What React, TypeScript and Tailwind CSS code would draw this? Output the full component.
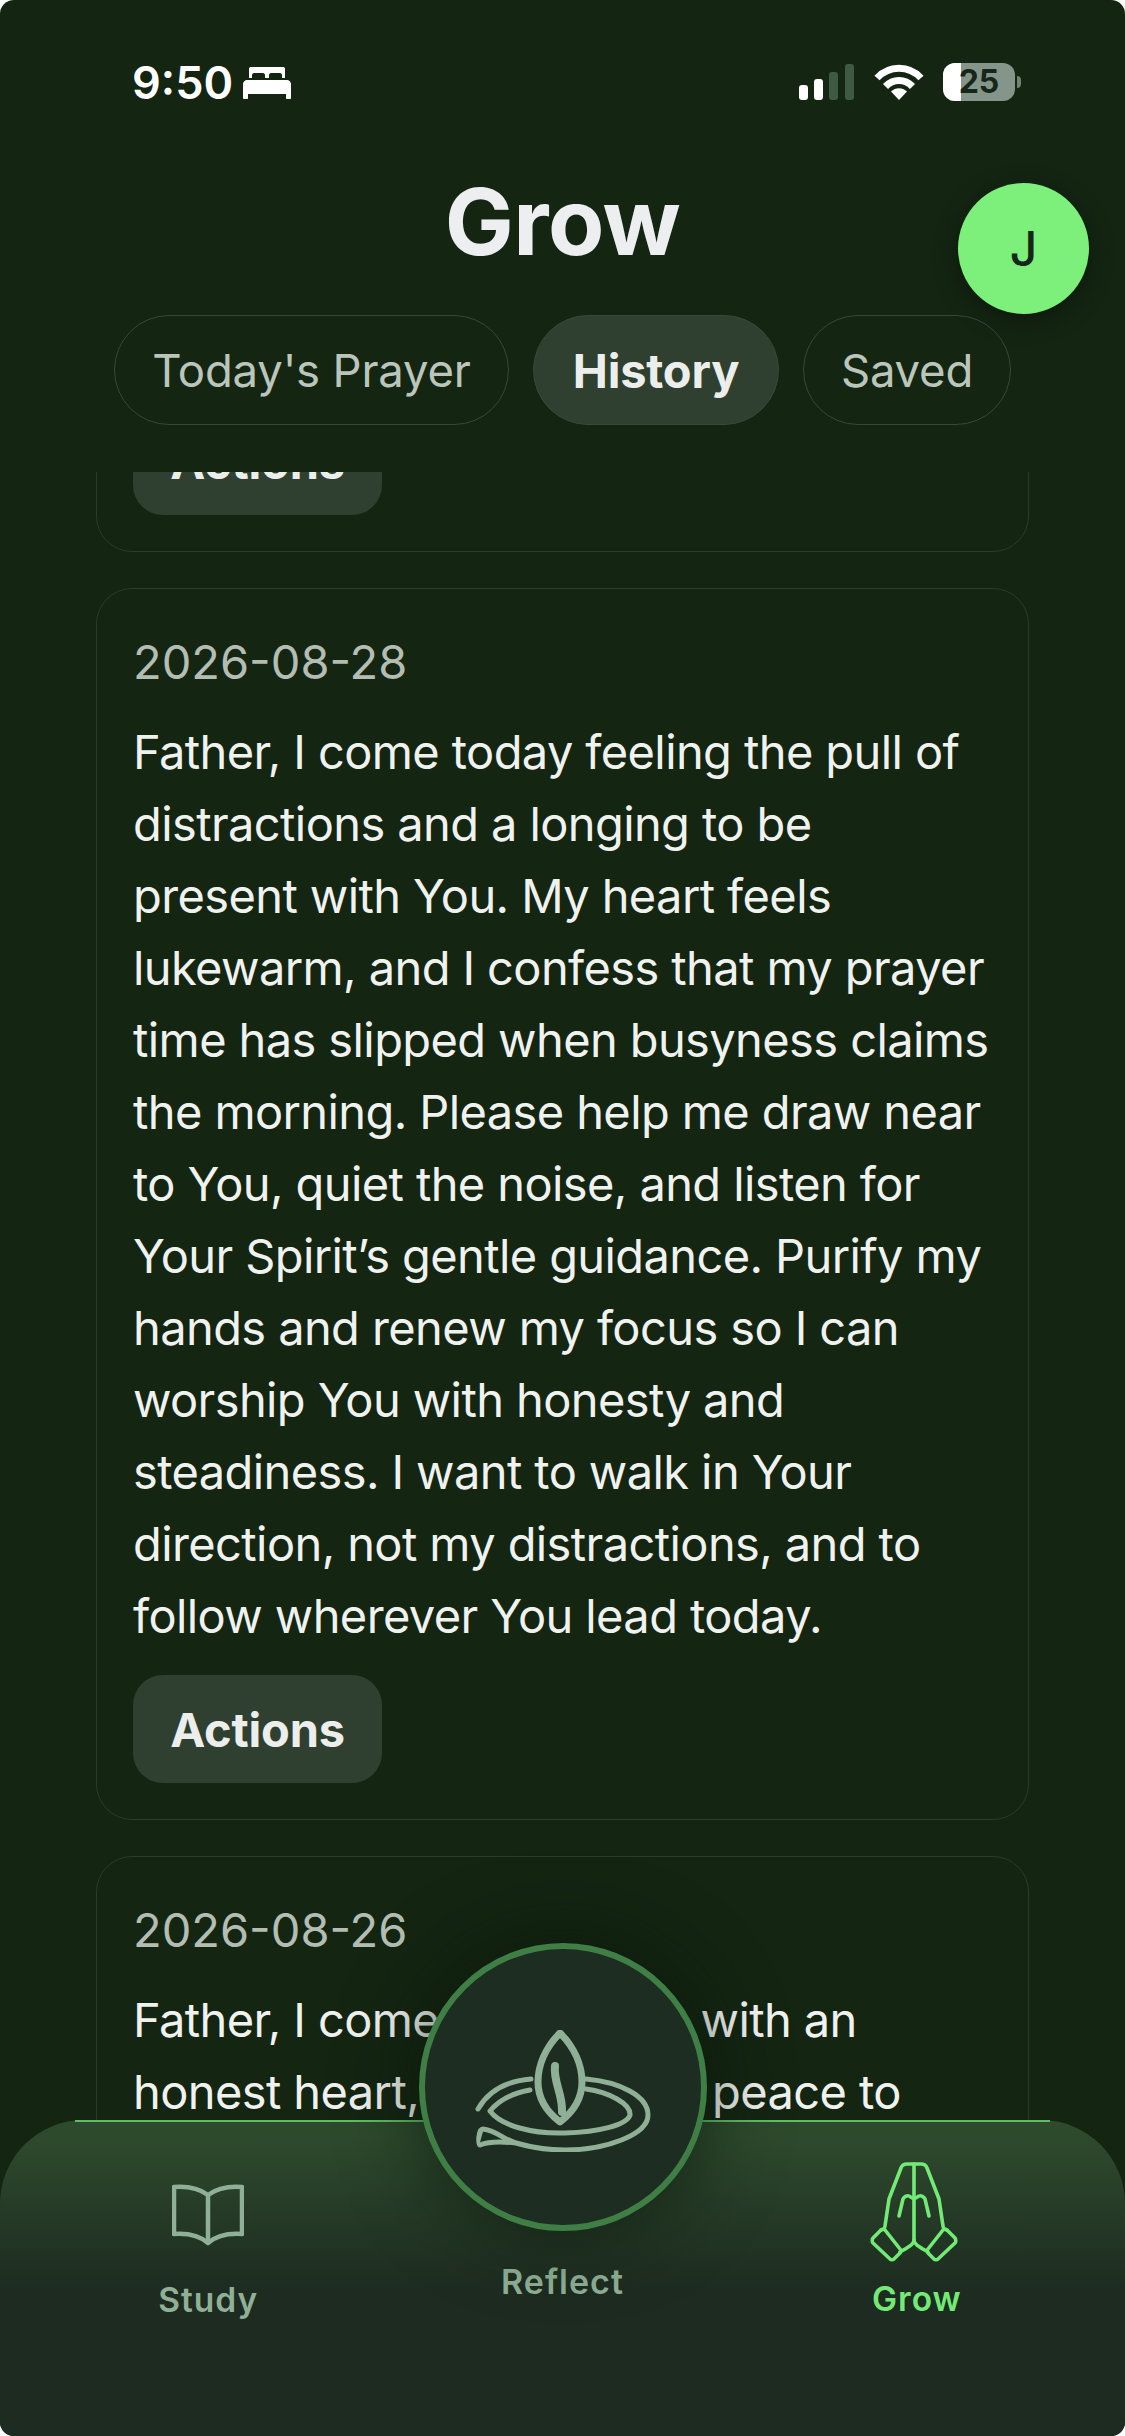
import { ReactNode } from 'react';

const sans = 'font-["Inter","Liberation_Sans",sans-serif]';

const prayer1 = [
  'Father, I come today feeling the pull of',
  'distractions and a longing to be',
  'present with You. My heart feels',
  'lukewarm, and I confess that my prayer',
  'time has slipped when busyness claims',
  'the morning. Please help me draw near',
  'to You, quiet the noise, and listen for',
  'Your Spirit’s gentle guidance. Purify my',
  'hands and renew my focus so I can',
  'worship You with honesty and',
  'steadiness. I want to walk in Your',
  'direction, not my distractions, and to',
  'follow wherever You lead today.',
];

const prayer2 = [
  'Father, I come before You with an',
  'honest heart, seeking true peace to',
  'settle over every part of my day.',
];

function StatusBar() {
  return (
    <div className="flex h-[166px] shrink-0 items-start justify-between pl-[132px] pr-[104px] pt-[55px]">
      <div className="flex items-center gap-[10px]">
        <span className="text-[45px] leading-[56px] font-semibold text-white">9:50</span>
        <svg width="48" height="32" viewBox="0 0 48 32" fill="#fff">
          <path d="M6 1.5C6 .7 7 0 8 0h32c1 0 2 .7 2 1.500V11h-3V8c0-1-1-2-2-2h-9c-1 0-2 1-2 2v3h-4V8c0-1-1-2-2-2h-9c-1 0-2 1-2 2v3H6Z" />
          <path d="M4 13h40c2 0 4 2 4 4v14c0 .6-.4 1-1 1h-3c-.6 0-1-.4-1-1v-4H5v4c0 .6-.4 1-1 1H1c-.6 0-1-.4-1-1V17c0-2 2-4 4-4Z" />
        </svg>
      </div>
      <div className="mt-[8px] flex items-center gap-[19px]">
        <svg width="56" height="36" viewBox="0 0 56 36">
          <rect x="0" y="21" width="9" height="15" rx="3" fill="#fff" />
          <rect x="15" y="15" width="9" height="21" rx="3" fill="#fff" />
          <rect x="30" y="8" width="9" height="28" rx="3" fill="#3f5a42" />
          <rect x="46" y="0" width="9" height="36" rx="3" fill="#3f5a42" />
        </svg>
        <svg width="50" height="37" viewBox="0 0 50 37" fill="none" stroke="#fff" strokeWidth="7">
          <path d="M3 14C15 1 35 1 47 14" />
          <path d="M11.500 22.500C19 14.500 31 14.500 38.500 22.500" />
          <path d="M25 36 17 27.500C21.500 23 28.500 23 33 27.500Z" fill="#fff" stroke="none" />
        </svg>
        <div className="flex items-center gap-[2px]">
          <div className="relative flex h-[38px] w-[72px] items-center justify-center overflow-hidden rounded-[12px] bg-[#85958a]">
            <div className="absolute inset-y-0 left-0 w-[18px] bg-white" />
            <span className="relative text-[32px] leading-none font-bold text-[#16261a]">25</span>
          </div>
          <div className="h-[12px] w-[4px] rounded-r-full bg-[#6f8274]" />
        </div>
      </div>
    </div>
  );
}

function Tab({ label, active, width }: { label: string; active?: boolean; width: string }) {
  return (
    <div
      className={`flex h-[110px] items-center justify-center rounded-full border border-[#364a38] pt-[2px] ${width} ${
        active ? 'bg-[#2f4030] text-[47px] font-bold tracking-[-0.2px] text-[#eceeec]' : 'text-[45.5px] tracking-[-0.2px] text-[#bcc5bc]'
      }`}
    >
      {label}
    </div>
  );
}

function ActionsButton() {
  return (
    <div className="flex h-[108px] w-[249px] items-center justify-center rounded-[30px] bg-[#2f4030] pt-[2px] text-[47px] font-bold tracking-[-0.2px] text-[#eceeec]">
      Actions
    </div>
  );
}

function Card({ date, lines, children }: { date?: string; lines: string[]; children?: ReactNode }) {
  return (
    <div className="shrink-0 rounded-[36px] border border-[#2a3c2c] px-[36px] pt-[37px] pb-[36px]">
      {date && <div className="mb-[18px] text-[47px] leading-[72px] text-[#b4bdb4]">{date}</div>}
      <div className="text-[47px] leading-[72px] tracking-[-0.6px] text-[#f0f2ef]">
        {lines.map((l) => (
          <div key={l} className="whitespace-nowrap">
            {l}
          </div>
        ))}
      </div>
      {children && <div className="mt-[23px]">{children}</div>}
    </div>
  );
}

function BookIcon() {
  return (
    <svg width="72" height="62" viewBox="0 0 72 62" fill="none" stroke="#8fb096" strokeWidth="4.500" strokeLinejoin="round">
      <path d="M2 3C16 2 28 5 36 11C44 5 56 2 70 3V50C56 49 44 52 36 59C28 52 16 49 2 50Z" />
      <path d="M36 11V59" />
    </svg>
  );
}

function ReflectIcon() {
  return (
    <svg width="176" height="122" viewBox="0 0 176 122" fill="none" stroke="#8fb096" strokeWidth="5" strokeLinecap="round" strokeLinejoin="round">
      <path d="M85 3C70 18 63 36 63 52C63 68 72 82 85 92C98 82 107 68 107 52C107 36 100 18 85 3Z" strokeWidth="7" />
      <path d="M80 36C78 52 88 64 87 82" strokeWidth="8" />
      <path d="M56 49C32 51 14 60 3 79" />
      <path d="M55 60C38 63 24 70 15 81C26 96 58 104 90 103C124 102 152 95 155 85C156 74 134 62 111 59" />
      <path d="M111 49C145 52 173 66 173 85C173 105 130 120 90 120C70 120 55 117 41 113C30 110 20 100 8 99C3 99 3 115 5 115C12 112 24 111 41 113" />
    </svg>
  );
}

function PrayIcon() {
  return (
    <svg width="88" height="100" viewBox="0 0 88 100" fill="none" stroke="#72ea75" strokeWidth="3.600" strokeLinecap="round" strokeLinejoin="round">
      <path d="M44 78V2M44 2H37C34 2 32 3 31 6L19 37L15 64C15 66 13 68 11 68" />
      <path d="M44 2H51C54 2 56 3 57 6L69 37L73 64C73 66 75 68 77 68" />
      <path d="M29 54L33 37C34 35 37 33 39 34L44 37L49 34C51 33 54 35 55 37L59 54" />
      <path d="M44 78C44 82 40 84 30 90M44 78C44 82 48 84 58 90" />
      <path d="M3 76L11 68C12 67 14 67 15 68L30 87C31 88 31 90 30 91L24 97C23 98 21 98 20 97L3 81C2 80 2 77 3 76Z" />
      <path d="M85 76L77 68C76 67 74 67 73 68L58 87C57 88 57 90 58 91L64 97C65 98 67 98 68 97L85 81C86 80 86 77 85 76Z" />
    </svg>
  );
}

function BottomNav() {
  return (
    <div className="absolute inset-x-0 bottom-0 h-[316px] rounded-t-[84px] bg-gradient-to-b from-[#2e4a2d] from-[5%] to-[#1d2b20] to-[55%]">
      <div className="absolute inset-x-[75px] top-0 h-[2px] bg-[#5cc060]" />
      <div className="grid h-full grid-cols-3 px-[31px]">
        <div className="flex flex-col items-center pt-[64px]">
          <BookIcon />
          <span className="mt-[34px] text-[33.5px] leading-[40px] font-semibold tracking-[1px] text-[#8fb096]">Study</span>
        </div>
        <div className="flex flex-col items-center pt-[142px]">
          <span className="text-[34px] leading-[40px] font-semibold tracking-[1px] text-[#8fb096]">Reflect</span>
        </div>
        <div className="flex flex-col items-center pt-[42px]">
          <div className="mr-[6px]">
            <PrayIcon />
          </div>
          <span className="mt-[17px] text-[33.5px] leading-[40px] font-semibold tracking-[1px] text-[#72ea75]">Grow</span>
        </div>
      </div>
      <div className="absolute top-[-177px] left-1/2 flex h-[288px] w-[288px] -translate-x-1/2 items-center justify-center rounded-full border-[6px] border-[#3f7f45] bg-[#1e2d22] shadow-[0_0_80px_rgba(8,20,10,0.7)]">
        <div className="mt-[8px]">
          <ReflectIcon />
        </div>
      </div>
    </div>
  );
}

export default function App() {
  return (
    <div className={`relative h-[2436px] w-[1125px] overflow-hidden rounded-[14px] bg-[#142512] ${sans}`}>
      <StatusBar />
      <div className="relative flex h-[149px] items-start justify-center">
        <h1 className="text-[92px] leading-[112px] font-bold tracking-[-0.5px] text-[#eceef0]">Grow</h1>
        <div className="absolute top-[17px] right-[36px] z-10 flex h-[131px] w-[131px] items-center justify-center rounded-full bg-[#7cf07a] text-[48px] font-medium text-[#16261a] shadow-[0_6px_24px_rgba(0,0,0,0.35)]">
          J
        </div>
      </div>
      <div className="flex gap-[24px] pl-[114px]">
        <Tab label="Today's Prayer" width="w-[395px]" />
        <Tab label="History" width="w-[246px]" active />
        <Tab label="Saved" width="w-[208px]" />
      </div>
      <div className="absolute inset-x-[96px] top-[472px] bottom-0 flex flex-col gap-[36px] overflow-hidden">
        <div className="-mt-[299px] flex h-[379px] shrink-0 flex-col justify-end rounded-[36px] border border-[#2a3c2c] p-[36px]">
          <ActionsButton />
        </div>
        <Card date="2026-08-28" lines={prayer1}>
          <ActionsButton />
        </Card>
        <Card date="2026-08-26" lines={prayer2} />
      </div>
      <BottomNav />
    </div>
  );
}
